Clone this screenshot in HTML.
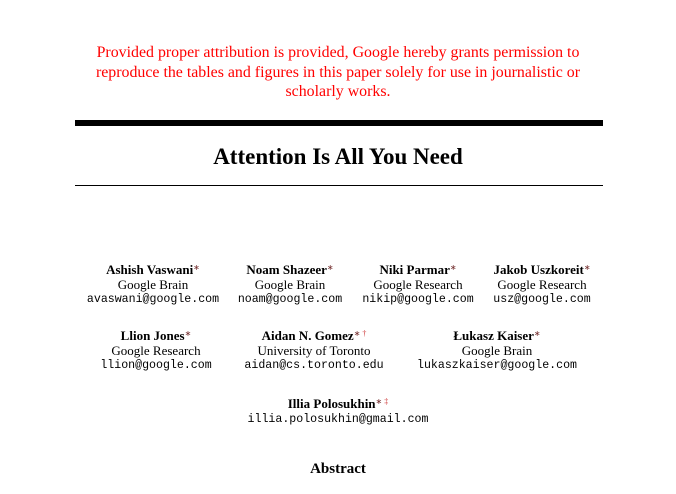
<!DOCTYPE html>
<html><head><style>
body{margin:0;width:676px;height:494px;background:#fff;position:relative;font-family:"Liberation Serif",serif;color:#000;overflow:hidden}
.a{position:absolute;transform:translateX(-50%);text-align:center;white-space:nowrap}
.r{color:#f00;font-size:15.9px;line-height:19.5px;top:43px;left:338px}
.n{font-weight:bold;font-size:13px;line-height:14.5px}
.n sup{font-weight:normal;font-size:8px;color:#733;vertical-align:4px}
.n sup b{font-weight:normal;color:#c33}
.f{font-size:13px;line-height:14.5px}
.m{font-family:"Liberation Mono",monospace;font-size:11.6px;line-height:15px}
</style></head><body>
<div class="a r">Provided proper attribution is provided, Google hereby grants permission to<br>reproduce the tables and figures in this paper solely for use in journalistic or<br>scholarly works.</div>
<div style="position:absolute;left:75px;top:120px;width:528px;height:6px;background:#000"></div>
<div class="a" style="left:338px;top:144px;font-weight:bold;font-size:23px">Attention Is All You Need</div>
<div style="position:absolute;left:75px;top:185px;width:528px;height:1.3px;background:#000"></div>

<div class="a" style="left:153px;top:261px"><div class="n">Ashish Vaswani<sup>∗</sup></div><div class="f">Google Brain</div><div class="m">avaswani@google.com</div></div>
<div class="a" style="left:290px;top:261px"><div class="n">Noam Shazeer<sup>∗</sup></div><div class="f">Google Brain</div><div class="m">noam@google.com</div></div>
<div class="a" style="left:418px;top:261px"><div class="n">Niki Parmar<sup>∗</sup></div><div class="f">Google Research</div><div class="m">nikip@google.com</div></div>
<div class="a" style="left:542px;top:261px"><div class="n">Jakob Uszkoreit<sup>∗</sup></div><div class="f">Google Research</div><div class="m">usz@google.com</div></div>

<div class="a" style="left:156px;top:327px"><div class="n">Llion Jones<sup>∗</sup></div><div class="f">Google Research</div><div class="m">llion@google.com</div></div>
<div class="a" style="left:314px;top:327px"><div class="n">Aidan N. Gomez<sup>∗ <b>†</b></sup></div><div class="f">University of Toronto</div><div class="m">aidan@cs.toronto.edu</div></div>
<div class="a" style="left:497px;top:327px"><div class="n">Łukasz Kaiser<sup>∗</sup></div><div class="f">Google Brain</div><div class="m">lukaszkaiser@google.com</div></div>

<div class="a" style="left:338px;top:395px"><div class="n">Illia Polosukhin<sup>∗ <b>‡</b></sup></div><div class="m">illia.polosukhin@gmail.com</div></div>

<div class="a" style="left:338px;top:461px;font-weight:bold;font-size:15px">Abstract</div>
</body></html>
